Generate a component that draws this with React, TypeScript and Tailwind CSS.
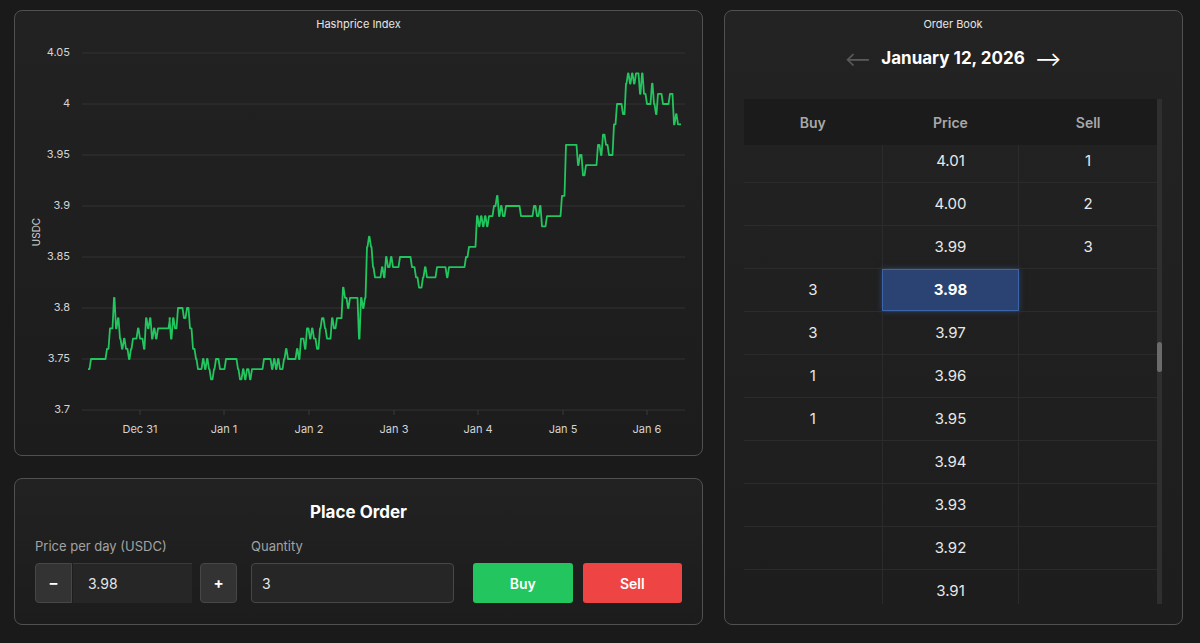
const font = { fontFamily: "Inter, 'Noto Sans', sans-serif" }

// hashprice samples: [chart x, price]
const series: [number, number][] = [
  [88, 3.74], [91, 3.75], [107, 3.76], [110, 3.78], [114, 3.81], [116, 3.78], [118, 3.79], [120, 3.77],
  [122, 3.76], [124, 3.77], [126, 3.76], [129, 3.75], [131, 3.76], [133, 3.77], [138, 3.78], [140, 3.77],
  [144, 3.76], [146, 3.79], [148, 3.78], [150, 3.79], [152, 3.77], [154, 3.78], [156, 3.77], [158, 3.78],
  [170, 3.79], [171, 3.77], [173, 3.79], [175, 3.78], [178, 3.8], [184, 3.79], [187, 3.8], [190, 3.78],
  [193, 3.76], [196, 3.75], [198, 3.74], [203, 3.75], [205, 3.74], [207, 3.75], [209, 3.74], [211, 3.73],
  [214, 3.74], [216, 3.75], [220, 3.74], [226, 3.75], [238, 3.74], [240, 3.73], [243, 3.74], [245, 3.73],
  [247, 3.74], [250, 3.73], [252, 3.74], [264, 3.75], [272, 3.74], [274, 3.75], [276, 3.74], [278, 3.75],
  [280, 3.74], [284, 3.75], [286, 3.76], [288, 3.75], [297, 3.76], [299, 3.75], [301, 3.77], [305, 3.76],
  [307, 3.78], [310, 3.77], [312, 3.78], [314, 3.77], [317, 3.76], [320, 3.78], [322, 3.79], [325, 3.78],
  [327, 3.77], [332, 3.79], [334, 3.78], [337, 3.79], [343, 3.82], [345, 3.81], [348, 3.8], [350, 3.81],
  [359, 3.77], [361, 3.81], [363, 3.8], [365, 3.81], [367, 3.86], [369, 3.87], [371, 3.86], [373, 3.84],
  [375, 3.83], [382, 3.84], [384, 3.83], [386, 3.85], [388, 3.84], [391, 3.85], [393, 3.84], [400, 3.85],
  [412, 3.84], [416, 3.83], [419, 3.82], [423, 3.83], [425, 3.84], [427, 3.83], [437, 3.84], [447, 3.83],
  [449, 3.84], [466, 3.85], [469, 3.86], [477, 3.89], [479, 3.88], [481, 3.89], [483, 3.88], [485, 3.89],
  [487, 3.88], [489, 3.89], [494, 3.9], [497, 3.91], [499, 3.89], [501, 3.9], [503, 3.89], [506, 3.9],
  [521, 3.89], [534, 3.9], [537, 3.89], [540, 3.9], [542, 3.88], [547, 3.89], [562, 3.91], [566, 3.96],
  [578, 3.94], [580, 3.95], [583, 3.93], [586, 3.94], [598, 3.96], [601, 3.95], [603, 3.97], [606, 3.96],
  [609, 3.95], [614, 3.98], [617, 4.0], [623, 3.99], [626, 4.02], [628, 4.03], [630, 4.02], [632, 4.03],
  [634, 4.02], [636, 4.03], [640, 4.01], [642, 4.03], [644, 4.01], [647, 4.0], [652, 4.02], [654, 4.0],
  [656, 3.99], [658, 4.01], [663, 4.0], [670, 4.01], [674, 3.98], [676, 3.99], [678, 3.98], [681, 3.98],
]

const yTicks = [4.05, 4, 3.95, 3.9, 3.85, 3.8, 3.75, 3.7]
const xTicks: [number, string][] = [
  [125, "Dec 31"], [209, "Jan 1"], [294, "Jan 2"], [379, "Jan 3"], [463, "Jan 4"], [548, "Jan 5"], [632, "Jan 6"],
]

const py = (v: number) => 72 + (4 - v) * 1020
const px = (x: number) => x - 15

function linePath() {
  let d = `M${px(series[0][0])},${py(series[0][1])}`
  for (let i = 1; i < series.length; i++) {
    const [x, v] = series[i]
    const prev = series[i - 1][1]
    d += ` L${px(x) - 1.5},${py(prev)} L${px(x)},${py(v)}`
  }
  return d
}

const HashpriceChart = () => (
  <div className="h-[446px] rounded-lg border border-[#505050] bg-linear-to-b from-[#222222] to-[#1c1c1c] pt-[5px]">
    <div className="text-center text-[11px] leading-[16px] text-[#e5e5e5]">Hashprice Index</div>
    <svg width="687" height="410" className="block">
      {yTicks.map((v) => (
        <g key={v}>
          <line x1="67" x2="670" y1={py(v)} y2={py(v)} stroke="#323232" strokeWidth="1" />
          <text x="55" y={py(v)} textAnchor="end" dominantBaseline="middle" fontSize="11" fill="#d4d4d4" style={font}>
            {v}
          </text>
        </g>
      ))}
      {xTicks.map(([x, label]) => (
        <g key={label}>
          <line x1={x} x2={x} y1="378" y2="383" stroke="#3a3a3a" />
          <text x={x} y="398" textAnchor="middle" dominantBaseline="middle" fontSize="11" fill="#d4d4d4" style={font}>
            {label}
          </text>
        </g>
      ))}
      <text
        x="22"
        y="200"
        transform="rotate(-90 22 200)"
        textAnchor="middle"
        dominantBaseline="middle"
        fontSize="10"
        fill="#d4d4d4"
        style={font}
      >
        USDC
      </text>
      <path d={linePath()} fill="none" stroke="#22c55e" strokeWidth="1.8" strokeLinejoin="round" />
    </svg>
  </div>
)

const PlaceOrder = () => (
  <div className="flex-1 rounded-lg border border-[#505050] bg-linear-to-b from-[#222222] to-[#1c1c1c] px-[20px] pt-[21px]">
    <h2 className="text-center text-[17px] font-bold leading-[24px] text-white">Place Order</h2>
    <div className="mt-[13px] flex items-end">
      <div className="flex flex-col">
        <label className="text-[13px] leading-[18px] text-[#a3a3a3]">Price per day (USDC)</label>
        <div className="mt-[8px] flex h-[40px]">
          <button className="w-[37px] rounded-l border border-[#474747] bg-[#333333] text-[15px] font-bold text-white">–</button>
          <div className="ml-px flex w-[119px] items-center border-t border-[#3a3a3a] bg-[#262626] pl-[15px] text-[14px] text-[#e5e5e5]">
            3.98
          </div>
          <button className="ml-[8px] w-[37px] rounded border border-[#474747] bg-[#333333] text-[15px] font-bold text-white">+</button>
        </div>
      </div>
      <div className="ml-[14px] flex flex-col">
        <label className="text-[13px] leading-[18px] text-[#a3a3a3]">Quantity</label>
        <div className="mt-[8px] flex h-[40px] w-[203px] items-center rounded border border-[#474747] bg-[#262626] pl-[10px] text-[14px] text-[#e5e5e5]">
          3
        </div>
      </div>
      <button className="ml-[19px] h-[40px] w-[100px] rounded-[3px] bg-[#22c55e] text-[14px] font-semibold text-white">Buy</button>
      <button className="ml-[10px] h-[40px] w-[100px] rounded-[3px] bg-[#ef4444] text-[14px] font-semibold text-white">Sell</button>
    </div>
  </div>
)

const rows: { buy?: number; price: string; sell?: number }[] = [
  { price: "4.01", sell: 1 },
  { price: "4.00", sell: 2 },
  { price: "3.99", sell: 3 },
  { buy: 3, price: "3.98" },
  { buy: 3, price: "3.97" },
  { buy: 1, price: "3.96" },
  { buy: 1, price: "3.95" },
  { price: "3.94" },
  { price: "3.93" },
  { price: "3.92" },
  { price: "3.91" },
]

const OrderBook = () => (
  <div className="flex w-[459px] flex-col rounded-lg border border-[#505050] bg-linear-to-b from-[#232323] to-[#1d1d1d] pb-[20px] pl-[19px] pr-[20px] pt-[5px]">
    <div className="text-center text-[11px] leading-[16px] text-[#e5e5e5]">Order Book</div>
    <div className="mt-[15px] flex h-[24px] items-center justify-center gap-[10px]">
      <span className="text-[20px] leading-none text-[#5a5a5a]">⟵</span>
      <span className="text-[17px] font-bold text-white">January 12, 2026</span>
      <span className="text-[20px] leading-none text-white">⟶</span>
    </div>
    <div className="mt-[28px] flex h-[505px] overflow-hidden">
      <div className="flex flex-1 flex-col overflow-hidden">
        <div className="relative z-10 grid h-[46px] shrink-0 grid-cols-3 items-center bg-[#1b1b1b] text-center text-[14px] font-semibold text-[#a8a8a8]">
          <span>Buy</span>
          <span>Price</span>
          <span>Sell</span>
        </div>
        <div className="-mt-[5px] flex flex-col">
          {rows.map((r) => {
            const active = r.price === "3.98"
            return (
              <div key={r.price} className="grid h-[43px] shrink-0 grid-cols-3 border-b border-[#2b2b2b] text-center text-[15px] text-[#e8e8e8]">
                <div className="flex items-center justify-center">{r.buy ?? ""}</div>
                <div
                  className={
                    active
                      ? "flex items-center justify-center border border-[#3c64a8] bg-[#2a4373] font-bold text-white shadow-[0_0_6px_rgba(59,100,170,0.5)]"
                      : "flex items-center justify-center border-x border-[#2b2b2b]"
                  }
                >
                  {r.price}
                </div>
                <div className="flex items-center justify-center">{r.sell ?? ""}</div>
              </div>
            )
          })}
        </div>
      </div>
      <div className="w-[5px] bg-[#2f2f2f]">
        <div className="mt-[243px] h-[30px] rounded-full bg-[#6b6b6b]" />
      </div>
    </div>
  </div>
)

export default function App() {
  return (
    <div className="flex h-[643px] w-full gap-[21px] bg-[#1a1a1a] pb-[18px] pl-[14px] pr-[17px] pt-[10px]" style={font}>
      <div className="flex w-[689px] flex-col gap-[22px]">
        <HashpriceChart />
        <PlaceOrder />
      </div>
      <OrderBook />
    </div>
  )
}
